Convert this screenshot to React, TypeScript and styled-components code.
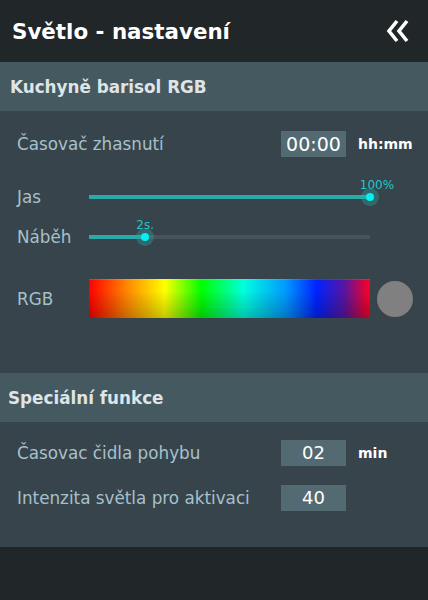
import styled, { createGlobalStyle } from 'styled-components'

const Global = createGlobalStyle`
	html, body {
		margin: 0;
		padding: 0;
		background: #212629;
		font-family: "DejaVu Sans", Verdana, sans-serif;
	}
`

const Page = styled.div`
	width: 428px;
	height: 600px;
	background: #212629;
	display: flex;
	flex-direction: column;
`

const Header = styled.header`
	height: 62px;
	display: flex;
	align-items: center;
	justify-content: space-between;
	padding: 0 18px 0 12px;
	box-sizing: border-box;
`

const Title = styled.h1`
	margin: 0;
	font-size: 21.4px;
	font-weight: bold;
	color: #ffffff;
	padding-top: 1px;
`

const BackButton = styled.button`
	border: none;
	background: none;
	padding: 0;
	width: 24px;
	height: 24px;
	display: flex;
	cursor: pointer;
`

const SectionTitle = styled.h2`
	margin: 0;
	height: 49px;
	display: flex;
	align-items: center;
	padding-left: ${p => p.$indent}px;
	background: #455960;
	color: #dfe4e6;
	font-size: 16.8px;
	font-weight: bold;
`

const SectionBody = styled.section`
	background: #37444b;
	padding: ${p => p.$pad};
	display: flex;
	flex-direction: column;
`

const Row = styled.div`
	display: grid;
	grid-template-columns: ${p => p.$cols};
	justify-content: start;
	align-items: center;
	height: ${p => p.$h}px;
	padding-left: 17px;
`

const Label = styled.span`
	color: #a6c0ca;
	font-size: 16.8px;
	white-space: nowrap;
`

const ValueBox = styled.div`
	width: 65px;
	height: 26px;
	background: #546a73;
	color: #ffffff;
	font-size: ${p => p.$size}px;
	display: flex;
	align-items: center;
	justify-content: center;
`

const Unit = styled.span`
	color: #ffffff;
	font-size: 14px;
	font-weight: bold;
	padding-left: 12px;
`

const Gap = styled.div`
	height: ${p => p.$h}px;
`

const Slider = styled.div`
	position: relative;
	width: 281px;
	height: 4px;
	background: #47555b;
`

const Fill = styled.div`
	height: 100%;
	background: #2aa9a8;
`

const Thumb = styled.div`
	position: absolute;
	top: 50%;
	width: 18px;
	height: 18px;
	margin: -9px 0 0 -9px;
	border-radius: 50%;
	background: rgba(42, 169, 168, 0.35);
	display: flex;
	align-items: center;
	justify-content: center;
	&::after {
		content: "";
		width: 8px;
		height: 8px;
		border-radius: 50%;
		background: #00f2f2;
	}
`

const ThumbLabel = styled.span`
	position: absolute;
	bottom: 14px;
	left: 50%;
	transform: translateX(calc(-50% + ${p => p.$shift}px));
	color: #22c6c9;
	font-size: 12px;
	white-space: nowrap;
`

const ColorBar = styled.div`
	width: 281px;
	height: 39px;
	background:
		linear-gradient(to bottom, rgba(0,0,0,0) 30%, rgba(0,0,0,0.22) 100%),
		linear-gradient(to right, #ff0000 0%, #ff8c00 14%, #ffff00 27%, #00ff00 40%, #00ffdd 55%, #0099ff 70%, #0022ff 81%, #5a14a0 91%, #ff0020 100%);
	box-shadow: inset 0 1px 0 rgba(255,255,255,0.12);
`

const Swatch = styled.div`
	width: 36px;
	height: 36px;
	border-radius: 50%;
	background: #808080;
	margin-left: 7px;
`

const SliderRow = ({ label, value, text, shift }: { label: string, value: number, text: string, shift: number }) =>
	<Row $cols="72px auto" $h={40}>
		<Label>{label}</Label>
		<Slider>
			<Fill style={{ width: value + '%' }} />
			<Thumb style={{ left: value + '%' }}>
				<ThumbLabel $shift={shift}>{text}</ThumbLabel>
			</Thumb>
		</Slider>
	</Row>

export default function App() {
	return <Page>
		<Global />
		<Header>
			<Title>Světlo - nastavení</Title>
			<BackButton aria-label="zpět">
				<svg width="24" height="24" viewBox="0 0 24 24" fill="none" stroke="#fff" strokeWidth="3.6" strokeLinejoin="miter">
					<polyline points="11,2 3,12 11,22" />
					<polyline points="21,2 13,12 21,22" />
				</svg>
			</BackButton>
		</Header>

		<SectionTitle $indent={10}>Kuchyně barisol RGB</SectionTitle>
		<SectionBody $pad="13px 0 33px">
			<Row $cols="264px auto auto" $h={40}>
				<Label>Časovač zhasnutí</Label>
				<ValueBox $size={19}>00:00</ValueBox>
				<Unit>hh:mm</Unit>
			</Row>
			<Gap $h={13} />
			<SliderRow label="Jas" value={100} text="100%" shift={7} />
			<SliderRow label="Náběh" value={20} text="2s." shift={0} />
			<Row $cols="72px auto auto" $h={83}>
				<Label>RGB</Label>
				<ColorBar />
				<Swatch />
			</Row>
		</SectionBody>

		<SectionTitle $indent={8}>Speciální funkce</SectionTitle>
		<SectionBody $pad="8px 0 27px">
			<Row $cols="264px auto auto" $h={45}>
				<Label>Časovac čidla pohybu</Label>
				<ValueBox $size={18}>02</ValueBox>
				<Unit>min</Unit>
			</Row>
			<Row $cols="264px auto auto" $h={45}>
				<Label>Intenzita světla pro aktivaci</Label>
				<ValueBox $size={18}>40</ValueBox>
			</Row>
		</SectionBody>
	</Page>
}
